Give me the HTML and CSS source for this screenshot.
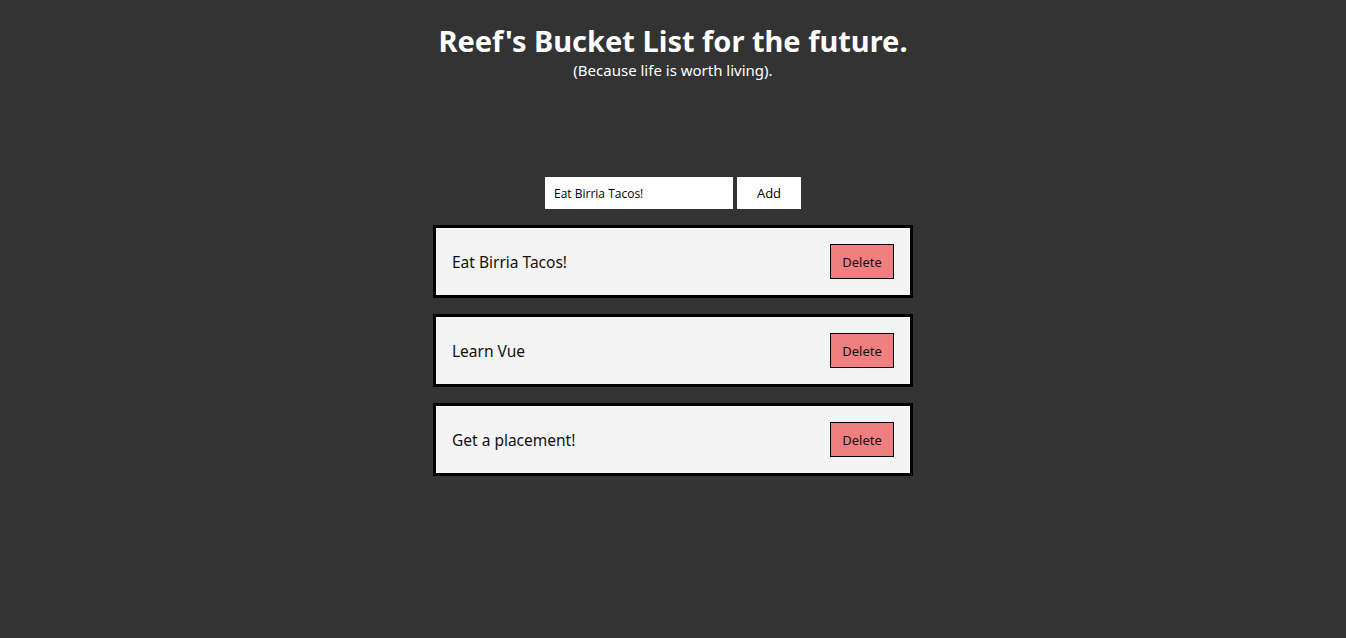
FILE: index.html
```html
<!DOCTYPE html>
<html>
<head>
<meta charset="utf-8">
<link rel="stylesheet" href="styles.css">
</head>
<body>
<div class="app">
  <header class="header">
    <h1 class="title">Reef's Bucket List for the future.</h1>
    <p class="subtitle">(Because life is worth living).</p>
  </header>
  <form class="add-form">
    <input class="add-input" type="text" value="Eat Birria Tacos!">
    <button class="add-btn" type="button">Add</button>
  </form>
  <ul class="list">
    <li class="item"><span class="item-text">Eat Birria Tacos!</span><button class="del-btn" type="button">Delete</button></li>
    <li class="item"><span class="item-text">Learn Vue</span><button class="del-btn" type="button">Delete</button></li>
    <li class="item"><span class="item-text">Get a placement!</span><button class="del-btn" type="button">Delete</button></li>
  </ul>
</div>
</body>
</html>
```

FILE: styles.css
```css
html, body {
  margin: 0;
  padding: 0;
  background: #333333;
  font-family: "Noto Sans", "Open Sans", sans-serif;
}
.app {
  display: flex;
  flex-direction: column;
  align-items: center;
  padding-top: 21px;
}
.header {
  text-align: center;
  color: #ffffff;
}
.title {
  margin: 0;
  font-size: 29px;
  font-weight: 700;
  line-height: 40px;
}
.subtitle {
  margin: 0;
  font-size: 15px;
  line-height: 18px;
}
.add-form {
  display: flex;
  gap: 4px;
  margin-top: 98px;
}
.add-input {
  box-sizing: border-box;
  width: 188px;
  height: 32px;
  border: none;
  padding: 0 9px;
  font-family: "Open Sans", "Noto Sans", sans-serif;
  font-size: 12px;
  color: #000;
  background: #fff;
  outline: none;
}
.add-btn {
  width: 64px;
  height: 32px;
  border: none;
  background: #fff;
  font-family: "Open Sans", "Noto Sans", sans-serif;
  font-size: 13px;
  color: #000;
  padding: 0;
}
.list {
  list-style: none;
  margin: 16px 0 0;
  padding: 0;
  display: flex;
  flex-direction: column;
  gap: 16px;
}
.item {
  box-sizing: border-box;
  width: 480px;
  border: 3px solid #000;
  background: #f4f4f4;
  padding: 16px;
  display: flex;
  align-items: center;
  justify-content: space-between;
}
.item-text {
  font-size: 15.5px;
  color: #111;
}
.del-btn {
  box-sizing: border-box;
  width: 64px;
  height: 35px;
  border: 1px solid #000;
  background: #f08080;
  font-family: "Noto Sans", sans-serif;
  font-size: 13px;
  color: #111;
  padding: 0;
}
```
